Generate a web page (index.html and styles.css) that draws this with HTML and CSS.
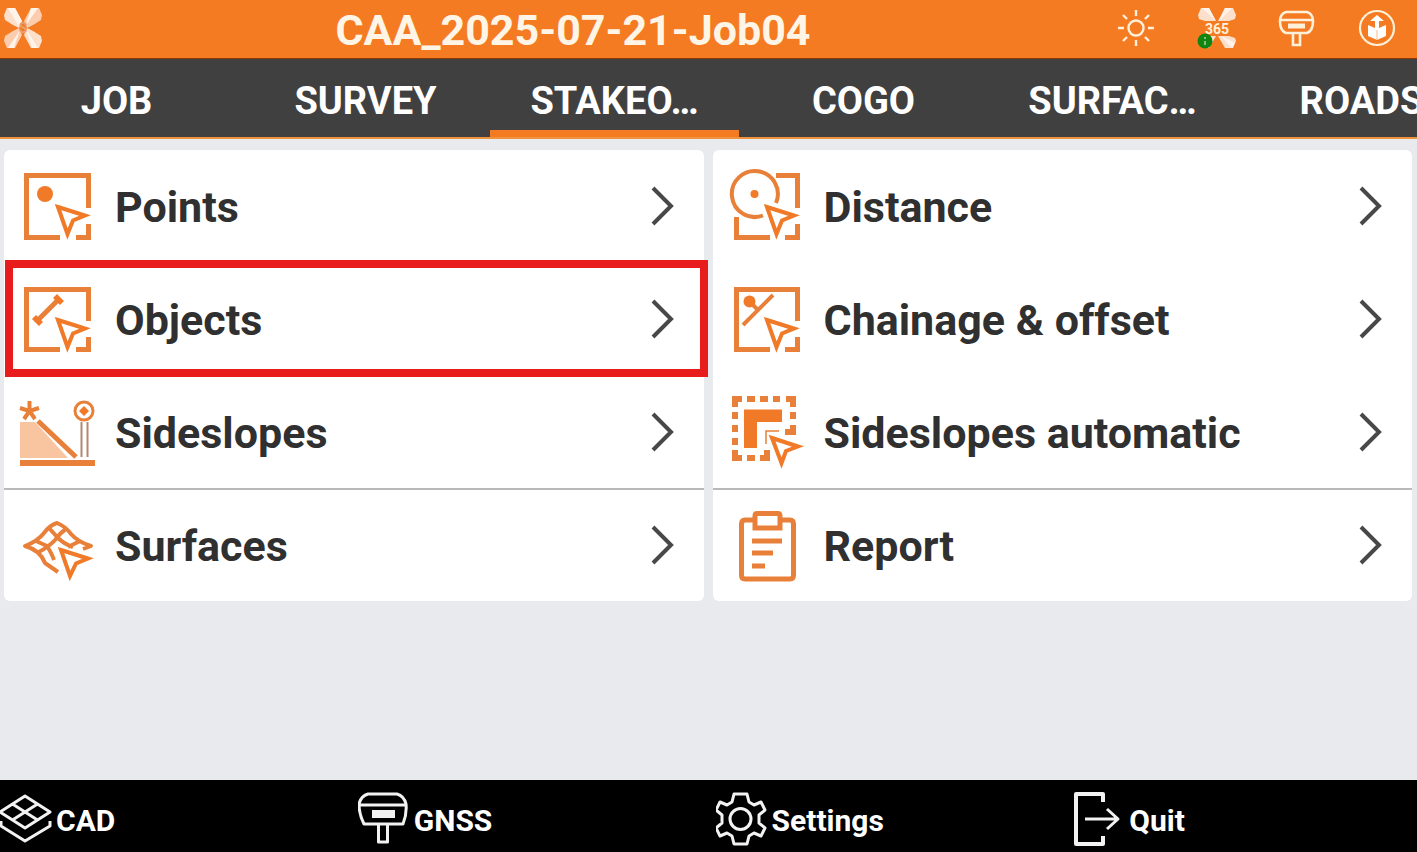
FILE: index.html
```html
<!DOCTYPE html>
<html lang="en">
<head>
<meta charset="UTF-8">
<meta name="viewport" content="width=device-width, initial-scale=1.0">
<title>CAA_2025-07-21-Job04</title>
<link rel="stylesheet" href="styles.css">
</head>
<body>

<header class="topbar">
    <svg class="app-logo" viewBox="0 0 40 42" aria-hidden="true">
        <path fill="#fde0cc" d="M1 8L4 1L12 1L19 14L16 21L10 18L2 13Z"/>
        <path fill="#fbcdae" d="M39 8L36 1L28 1L21 14L24 21L30 18L38 13Z"/>
        <path fill="#fbcdae" d="M1 34L4 41L12 41L19 28L16 21L10 24L2 29Z"/>
        <path fill="#fde0cc" d="M39 34L36 41L28 41L21 28L24 21L30 24L38 29Z"/>
        <path fill="#fff3ea" d="M5 1L12 1L19 14L16 20ZM28 1L35 1L23 18ZM11 41L5 41L17 23ZM29 41L35 41L23 22Z"/>
        <text class="logo-letter" x="20" y="26">S</text>
    </svg>
    <h1 class="job-name">CAA_2025-07-21-Job04</h1>
    <div class="status">
        <button type="button" class="status-btn" aria-label="Brightness">
            <svg viewBox="0 0 40 42" fill="none" stroke="#fff0da" stroke-width="2.4">
                <circle cx="19" cy="21" r="7.5"/>
                <path d="M19 3V9M19 33V39M1 21H7M31 21H37M6 8L10 12M28 30L32 34M6 34L10 30M28 12L32 8"/>
            </svg>
        </button>
        <button type="button" class="status-btn" aria-label="Cloud 365">
            <svg viewBox="0 0 40 42">
                <path fill="#fde0cc" d="M1 8L4 1L12 1L19 14H8L2 12Z M39 8L36 1L28 1L21 14H32L38 12Z M39 34L36 41L28 41L21 29H32L38 31Z M10 29H19L12 41H6Z"/>
                <path fill="#fff4ed" d="M5 1L12 1L19 14ZM28 1L35 1L22 14ZM38 36L35 41L24 29Z"/>
                <text class="logo-number" x="20" y="27">365</text>
                <circle cx="8" cy="34" r="7.5" fill="#118411"/>
                <path d="M8 30V32M8 34V38" stroke="#7cc576" stroke-width="2"/>
            </svg>
        </button>
        <button type="button" class="status-btn" aria-label="Receiver">
            <svg viewBox="0 0 40 42" fill="none" stroke="#fff0da" stroke-width="2.6">
                <path d="M9 5H30Q36 7 36 14Q36 24 30 26H9Q3 24 3 14Q3 7 9 5ZM4 13H35"/>
                <path d="M11 19H28" stroke-width="5"/>
                <path d="M16 27V38H23V27"/>
            </svg>
        </button>
        <button type="button" class="status-btn" aria-label="Upload">
            <svg viewBox="0 0 40 42" fill="none" stroke="#fff0da" stroke-width="2.2">
                <circle cx="20" cy="21" r="17"/>
                <path fill="#fff" stroke="none" d="M20 8L27 14H22V21L29 18V29L20 33L11 29V18L18 21V14H13Z"/>
                <path d="M20 23V33" stroke="#f9b888" stroke-width="1"/>
            </svg>
        </button>
    </div>
</header>

<nav class="tabs">
    <a class="tab" href="#job">JOB</a>
    <a class="tab" href="#survey">SURVEY</a>
    <a class="tab active" href="#stakeout" aria-current="page">STAKEO…</a>
    <a class="tab" href="#cogo">COGO</a>
    <a class="tab" href="#surfaces">SURFAC…</a>
    <a class="tab" href="#roads">ROADS</a>
</nav>

<main class="menu">
    <div class="panel">
        <a class="item" href="#points">
            <svg class="icon" viewBox="0 0 84 84">
                <path d="M72.5 43V10.5H10.5V72.5H44M60 72.5H72.5V59"/>
                <circle class="solid" cx="29" cy="29" r="8"/>
                <path class="cursor" d="M42 42L69 50.5L57 55.5L51.5 69Z"/>
            </svg>
            <span class="label">Points</span>
            <svg class="chevron" viewBox="0 0 24 42"><path d="M2 2L20 20L2 38"/></svg>
        </a>
        <a class="item highlight" href="#objects">
            <svg class="icon" viewBox="0 0 84 84">
                <path d="M72.5 43V11.5H10.5V71.5H44M60 71.5H72.5V59"/>
                <path d="M21 43L43 21"/>
                <path class="solid" d="M20 37L27 44L23 48L16 41ZM41 16L48 23L44 27L37 20Z"/>
                <path class="cursor" d="M42 42L69 50.5L57 55.5L51.5 69Z"/>
            </svg>
            <span class="label">Objects</span>
            <svg class="chevron" viewBox="0 0 24 42"><path d="M2 2L20 20L2 38"/></svg>
        </a>
        <a class="item" href="#sideslopes">
            <svg class="icon" viewBox="0 0 84 84">
                <path class="tint" d="M4 31H19L52 67H4Z"/>
                <path d="M13.5 20V10M13.5 20L4 17M13.5 20L23 17M13.5 20L8 28M13.5 20L19 28" stroke-width="4"/>
                <path d="M22 30L60 66"/>
                <path d="M4 72H79" stroke-width="6"/>
                <path class="pole" d="M65.5 31V66M71.5 31V66"/>
                <circle cx="68" cy="20" r="9" stroke-width="3"/>
                <path class="solid" d="M68 15L73 20L68 25L63 20Z"/>
            </svg>
            <span class="label">Sideslopes</span>
            <svg class="chevron" viewBox="0 0 24 42"><path d="M2 2L20 20L2 38"/></svg>
        </a>
        <a class="item divided" href="#surface-list">
            <svg class="icon" viewBox="0 0 84 84">
                <g stroke-width="4" stroke-linejoin="round">
                    <path d="M42 68L29 59Q24 46 9 42Q22 37 28 29Q34 21 41 19Q49 22 55 30Q62 38 75 42L67 45"/>
                    <path d="M33 24L42 34Q48 40 57 43M20 37L31 42Q36 50 38 56M51 24Q44 29 40 35Q33 43 21 49M64 37L52 43"/>
                </g>
                <path class="cursor" d="M45 46L72 54.5L60 59.5L54 72Z"/>
            </svg>
            <span class="label">Surfaces</span>
            <svg class="chevron" viewBox="0 0 24 42"><path d="M2 2L20 20L2 38"/></svg>
        </a>
    </div>

    <div class="panel">
        <a class="item" href="#distance">
            <svg class="icon" viewBox="0 0 84 84">
                <path stroke-width="4" d="M51 38A23 23 0 1 0 38 50.5"/>
                <circle class="solid" cx="29.5" cy="29" r="4"/>
                <path d="M51 10.5H72.5V43M11.5 52V72.5H45M60 72.5H72.5V59"/>
                <path class="cursor" d="M42 42L69 50.5L57 55.5L51.5 69Z"/>
            </svg>
            <span class="label">Distance</span>
            <svg class="chevron" viewBox="0 0 24 42"><path d="M2 2L20 20L2 38"/></svg>
        </a>
        <a class="item" href="#chainage">
            <svg class="icon" viewBox="0 0 84 84">
                <path d="M72.5 43V11.5H11.5V71.5H45M60 71.5H72.5V59"/>
                <path stroke-width="4" d="M18 47L48 17M25 24L32 31"/>
                <circle class="solid" cx="24.5" cy="23.5" r="6"/>
                <path class="cursor" d="M42 42L69 50.5L57 55.5L51.5 69Z"/>
            </svg>
            <span class="label">Chainage &amp; offset</span>
            <svg class="chevron" viewBox="0 0 24 42"><path d="M2 2L20 20L2 38"/></svg>
        </a>
        <a class="item" href="#sideslopes-auto">
            <svg class="icon" viewBox="0 0 84 84">
                <path stroke-width="6" d="M17 8H10V16M22 8H30M35 8H43M48 8H55M61 8H68V16M10 21V28M10 34V41M10 47V54M10 59V67H17M22 67H30M35 67H42V59M68 21V28M68 34V41H60"/>
                <path class="solid" d="M19 18.5H57V31H32V57H19Z"/>
                <path d="M41 53V40H54" stroke-width="1.5"/>
                <path class="cursor" d="M47 47L73 55.5L61 60L56.5 72Z"/>
            </svg>
            <span class="label">Sideslopes automatic</span>
            <svg class="chevron" viewBox="0 0 24 42"><path d="M2 2L20 20L2 38"/></svg>
        </a>
        <a class="item divided" href="#report">
            <svg class="icon" viewBox="0 0 84 84">
                <path d="M29 16H20Q16.5 16 16.5 20V71Q16.5 75 20 75H65Q68.5 75 68.5 71V20Q68.5 16 65 16H56"/>
                <path d="M32 9.5H53Q55 9.5 55 12V24H30V12Q30 9.5 32 9.5Z"/>
                <path d="M27 37H57M27 49H48M27 62H40"/>
            </svg>
            <span class="label">Report</span>
            <svg class="chevron" viewBox="0 0 24 42"><path d="M2 2L20 20L2 38"/></svg>
        </a>
    </div>
</main>

<footer class="bottombar">
    <button type="button" class="action">
        <svg viewBox="0 0 52 54">
            <path d="M25 4L50 20L25 36L0 20ZM12.5 12L37.5 28M37.5 12L12.5 28M1 29V34L25 49L50 34V29"/>
        </svg>
        <span>CAD</span>
    </button>
    <button type="button" class="action">
        <svg viewBox="0 0 52 54">
            <path d="M10 2H39Q46 4 48 12Q49 22 45 32H6Q1 22 1 12Q3 4 10 2ZM1 13H48M20.5 33V50H29.5V33"/>
            <path d="M14 22H37" stroke-width="8"/>
        </svg>
        <span>GNSS</span>
    </button>
    <button type="button" class="action">
        <svg viewBox="0 0 52 54">
            <path d="M18 2H31L33 10L38 13L45 10L49 18L43 23V31L49 36L45 44L38 41L33 44L31 52H18L16 44L11 41L4 44L0 36L6 31V23L0 18L4 10L11 13L16 10Z"/>
            <circle cx="24.5" cy="27" r="10.5"/>
        </svg>
        <span>Settings</span>
    </button>
    <button type="button" class="action">
        <svg viewBox="0 0 52 54">
            <path stroke-width="4" d="M30 10V2H3V52H30V44"/>
            <path d="M12 27H45M34 17L45 27L34 37"/>
        </svg>
        <span>Quit</span>
    </button>
</footer>

</body>
</html>
```
FILE: styles.css
```css
* {
    box-sizing: border-box;
}
body {
    display: flex;
    flex-direction: column;
    min-height: 100vh;
    margin: 0;
    overflow-x: hidden;
    font-family: Roboto, "Liberation Sans", sans-serif;
    font-weight: 700;
    background-color: #e9eaee;
}
button {
    padding: 0;
    border: none;
    background: none;
    color: inherit;
    font: inherit;
    cursor: pointer;
}
a {
    color: inherit;
    text-decoration: none;
}

/* top bar */
.topbar {
    display: flex;
    align-items: center;
    height: 59px;
    padding: 0 20px 2px 3px;
    background-color: #f57b22;
    border-bottom: 1px solid #8f3a04;
    color: #fff5e6;
}
.app-logo {
    width: 40px;
    height: 42px;
}
.job-name {
    flex: 1;
    margin: 0;
    padding: 4px 14px 0 0;
    text-align: center;
    font-size: 43px;
    font-weight: 700;
    line-height: 48px;
}
.status {
    display: flex;
    gap: 40px;
}
.status-btn,
.status-btn svg {
    display: block;
    width: 40px;
    height: 42px;
}
.logo-letter {
    font-size: 14px;
    fill: #e9a06c;
    text-anchor: middle;
}
.logo-number {
    font-size: 14px;
    fill: #fff0da;
    text-anchor: middle;
}

/* tabs */
.tabs {
    display: flex;
    height: 80px;
    margin-left: -8px;
    overflow: hidden;
    background-color: #404040;
    border-bottom: 2px solid #f0933f;
    color: #fff;
}
.tab {
    flex: 0 0 249px;
    padding-top: 18px;
    text-align: center;
    font-size: 38px;
    line-height: 48px;
}
.tab.active {
    border-bottom: 7px solid #f57b22;
}

/* menu */
.menu {
    flex: 1;
    display: grid;
    grid-template-columns: 1fr 1fr;
    align-items: start;
    gap: 9px;
    padding: 11px 5px 11px 4px;
}
.panel {
    background-color: #fff;
    border-radius: 6px;
}
.item {
    position: relative;
    display: flex;
    align-items: center;
    height: 113px;
    padding: 0 29px 0 12px;
    color: #303030;
}
.item.divided {
    margin-top: -1px;
    border-top: 2px solid #b9b9b9;
}
.item.highlight::after {
    content: "";
    position: absolute;
    inset: -3px -4px -1px 1px;
    border: 8px solid #e81c1c;
}
.label {
    flex: 1;
    padding-left: 15px;
    font-size: 43px;
    line-height: 48px;
}
.icon {
    width: 84px;
    height: 84px;
    fill: none;
    stroke: #e8803a;
    stroke-width: 5;
}
.icon .solid {
    fill: #f07a28;
    stroke: none;
}
.icon .tint {
    fill: #f9c5a1;
    stroke: none;
}
.icon .pole {
    stroke: #b08a74;
    stroke-width: 2;
}
.icon .cursor {
    stroke: #f07a28;
    stroke-width: 4;
}
.chevron {
    width: 24px;
    height: 42px;
    fill: none;
    stroke: #484848;
    stroke-width: 4;
}

/* bottom bar */
.bottombar {
    display: grid;
    grid-template-columns: repeat(4, 1fr);
    width: 101%;
    height: 72px;
    padding-top: 6px;
    background-color: #000;
    color: #fff;
}
.action {
    display: flex;
    align-items: center;
    gap: 4px;
    font-size: 30px;
    line-height: 36px;
}
.action span {
    padding-top: 3px;
}
.action svg {
    width: 52px;
    height: 54px;
    fill: none;
    stroke: #f2f2f2;
    stroke-width: 3;
    stroke-linejoin: round;
}
```
